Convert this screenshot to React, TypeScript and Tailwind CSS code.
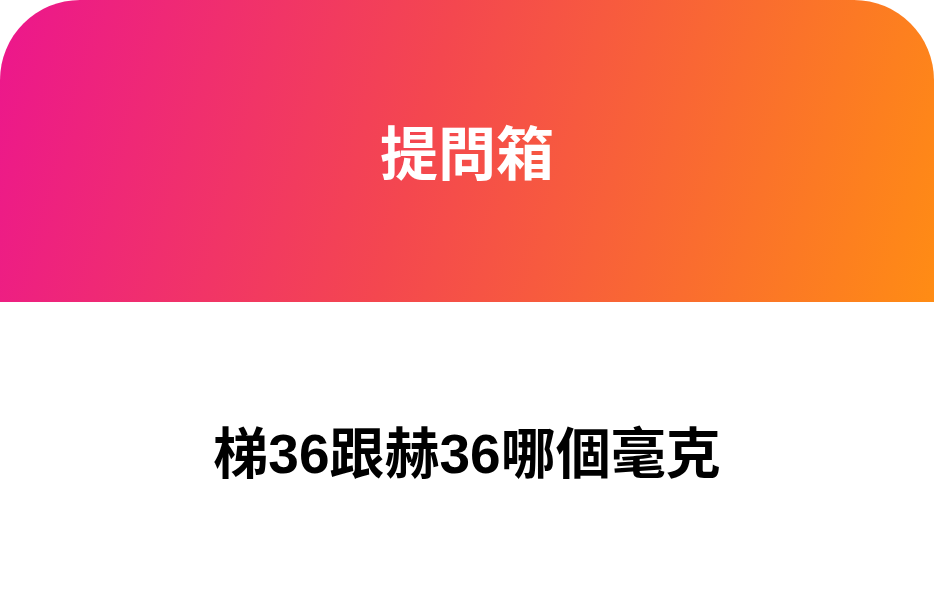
export default function App() {
  return (
    <div className="w-[934px] h-[606px] bg-white flex flex-col font-['Liberation_Sans','Noto_Sans_CJK_TC',sans-serif]">
      {/* Header */}
      <div className="h-[302px] rounded-t-[80px] bg-[linear-gradient(105deg,#ec168d_0%,#f4474f_45%,#ff8c14_100%)] flex items-center justify-center pt-[8px]">
        <h1 className="text-white text-[58px] font-bold leading-none">提問箱</h1>
      </div>

      {/* Question */}
      <div className="flex-1 flex items-center justify-center">
        <p className="text-black text-[55px] font-bold leading-none">梯36跟赫36哪個毫克</p>
      </div>
    </div>
  );
}
